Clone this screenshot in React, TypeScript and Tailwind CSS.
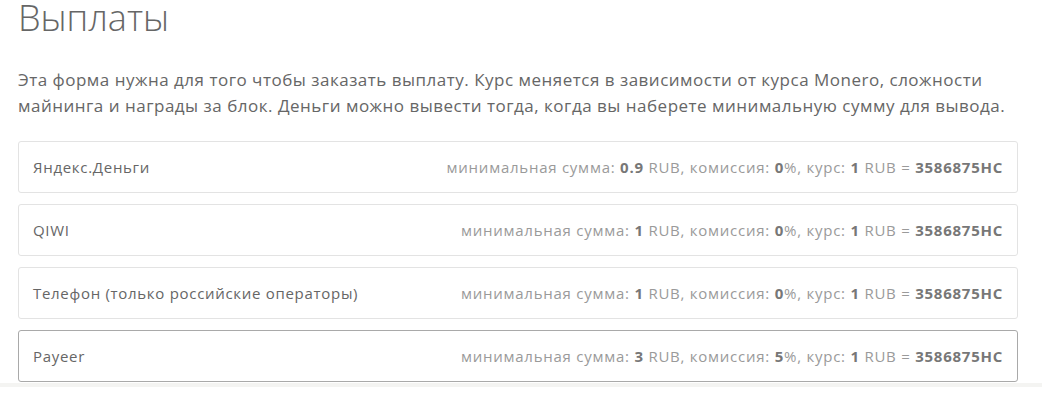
import React from 'react';

interface Method {
  name: string;
  min: string;
  fee: string;
  hover?: boolean;
}

const methods: Method[] = [
  { name: 'Яндекс.Деньги', min: '0.9', fee: '0' },
  { name: 'QIWI', min: '1', fee: '0' },
  { name: 'Телефон (только российские операторы)', min: '1', fee: '0' },
  { name: 'Payeer', min: '3', fee: '5', hover: true },
];

const PayoutRow: React.FC<{ method: Method }> = ({ method }) => (
  <div
    className={`flex items-center justify-between h-[52px] px-[14px] rounded-[3px] border bg-white ${
      method.hover ? 'border-[#a9a9a9]' : 'border-[#e3e3e3]'
    }`}
  >
    <span className="text-[15px] tracking-[0.7px] text-[#666]">{method.name}</span>
    <span className="text-[15px] tracking-[0.75px] text-[#9a9a9a]">
      минимальная сумма: <b className="font-bold text-[#777]">{method.min}</b> RUB, комиссия:{' '}
      <b className="font-bold text-[#777]">{method.fee}</b>%, курс: <b className="font-bold text-[#777]">1</b> RUB ={' '}
      <b className="font-bold text-[#777]">3586875HC</b>
    </span>
  </div>
);

export default function App() {
  return (
    <div className="w-[1042px] h-[401px] bg-white overflow-hidden" style={{ fontFamily: '"Open Sans", sans-serif' }}>
      <div className="px-[18px] pr-[24px]">
        <h1 className="text-[36px] leading-none font-light text-[#666]">Выплаты</h1>
        <p className="mt-[31px] text-[17px] leading-[26px] tracking-[0.5px] text-[#666] whitespace-nowrap">
          Эта форма нужна для того чтобы заказать выплату. Курс меняется в зависимости от курса Monero, сложности
          <br />
          майнинга и награды за блок. Деньги можно вывести тогда, когда вы наберете минимальную сумму для вывода.
        </p>
        <div className="mt-[22px] flex flex-col gap-[11px]">
          {methods.map((m) => (
            <PayoutRow key={m.name} method={m} />
          ))}
        </div>
      </div>
      <div className="mt-[1px] h-[4px] bg-[#f4f4f2]" />
    </div>
  );
}
